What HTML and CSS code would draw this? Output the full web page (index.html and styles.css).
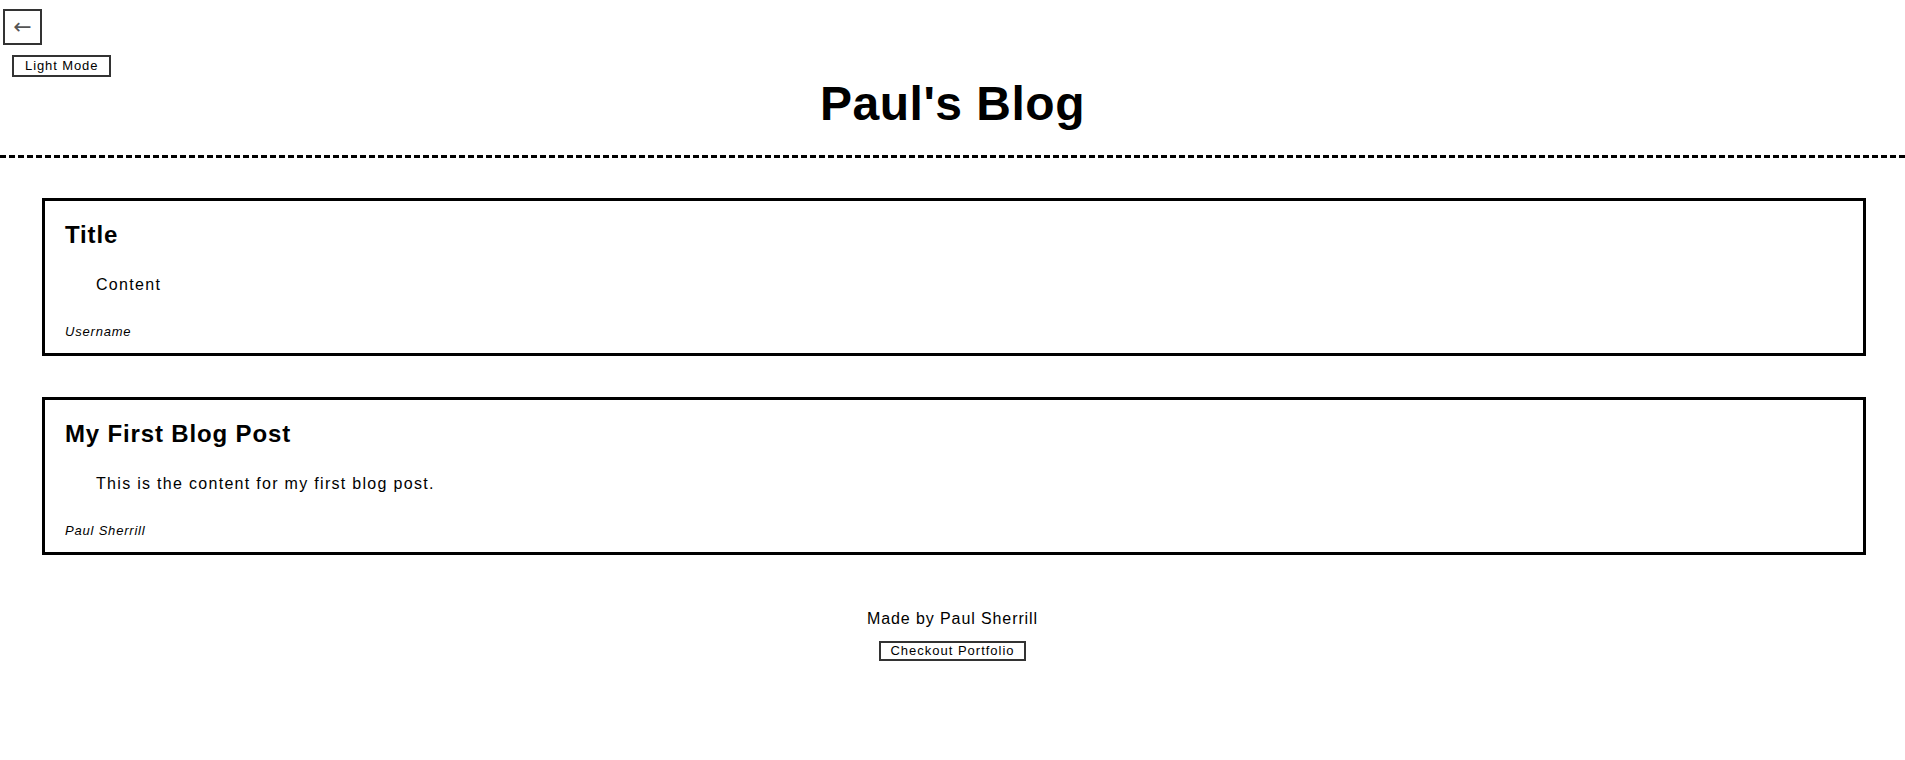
FILE: index.html
```html
<!DOCTYPE html>
<html lang="en">
<head>
<meta charset="utf-8">
<title>Paul's Blog</title>
<link rel="stylesheet" href="styles.css">
</head>
<body>
<header class="top">
  <button class="back-btn" type="button">&larr;</button>
  <button class="mode-btn" type="button">Light Mode</button>
  <h1 class="site-title">Paul's Blog</h1>
</header>
<main class="posts">
  <article class="post">
    <h2 class="post-title">Title</h2>
    <p class="post-content">Content</p>
    <p class="post-author">Username</p>
  </article>
  <article class="post">
    <h2 class="post-title">My First Blog Post</h2>
    <p class="post-content">This is the content for my first blog post.</p>
    <p class="post-author">Paul Sherrill</p>
  </article>
</main>
<footer class="footer">
  <p class="footer-text">Made by Paul Sherrill</p>
  <button class="portfolio-btn" type="button">Checkout Portfolio</button>
</footer>
</body>
</html>
```
FILE: styles.css
```css
* { box-sizing: border-box; }

body {
  margin: 0;
  background: #fff;
  color: #000;
  font-family: "Liberation Sans", Arial, sans-serif;
  letter-spacing: 0.6px;
}

.top {
  display: flex;
  flex-direction: column;
  align-items: flex-start;
  border-bottom: 3px dashed #000;
  padding-bottom: 24px;
}

.back-btn {
  margin: 9px 0 0 3px;
  width: 39px;
  height: 36px;
  padding: 0;
  border: 2px solid #333;
  background: #fff;
  color: #555;
  font-family: "DejaVu Sans", sans-serif;
  font-size: 22px;
  line-height: 30px;
  letter-spacing: 0;
}

.mode-btn {
  margin: 10px 0 0 12px;
  height: 22px;
  padding: 1px 11px;
  border: 2px solid #333;
  background: #fff;
  color: #000;
  font-family: "Liberation Sans", Arial, sans-serif;
  font-size: 13px;
  line-height: 16px;
  letter-spacing: 0.9px;
}

.site-title {
  align-self: stretch;
  margin: 0;
  text-align: center;
  font-size: 48px;
  line-height: 54px;
  font-weight: bold;
  letter-spacing: 0.5px;
}

.posts {
  display: flex;
  flex-direction: column;
  gap: 41px;
  padding: 40px 39px 0 42px;
}

.post {
  border: 3px solid #000;
  padding: 20px 20px 13px;
}

.post-title {
  margin: 0;
  font-size: 24px;
  line-height: 28px;
  font-weight: bold;
  letter-spacing: 0.85px;
}

.post-content {
  margin: 26px 0 0 31px;
  font-size: 16px;
  line-height: 20px;
  letter-spacing: 1.3px;
}

.post-author {
  margin: 29px 0 0;
  font-size: 13px;
  line-height: 16px;
  font-style: italic;
  letter-spacing: 0.8px;
}

.footer {
  display: flex;
  flex-direction: column;
  align-items: center;
  padding-top: 54px;
}

.footer-text {
  margin: 0;
  font-size: 16px;
  line-height: 20px;
  letter-spacing: 0.9px;
}

.portfolio-btn {
  margin-top: 12px;
  height: 20px;
  padding: 0 9px;
  border: 2px solid #333;
  background: #fff;
  color: #000;
  font-family: "Liberation Sans", Arial, sans-serif;
  font-size: 13px;
  line-height: 16px;
  letter-spacing: 1px;
}
```
